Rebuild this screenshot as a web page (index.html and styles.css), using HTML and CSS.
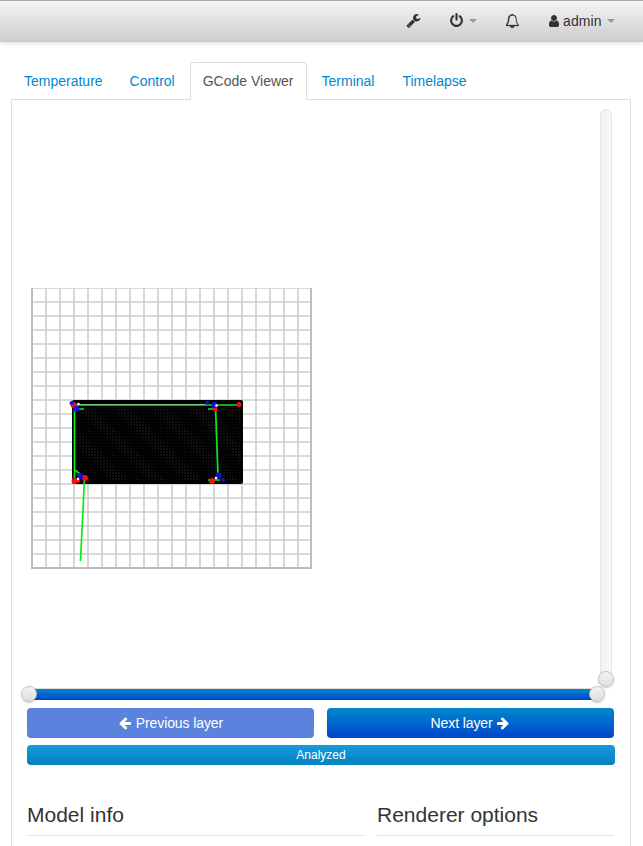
FILE: index.html
```html
<!DOCTYPE html>
<html lang="en">
  <head>
    <meta charset="UTF-8">
    <title>OctoPrint</title>
    <link rel="stylesheet" href="styles.css">
  </head>
  <body>
    <div class="navbar">
      <div class="nav-item nav-wrench">
        <svg class="icon" viewBox="0 0 1792 1792"><path d="M448 1472q0-26-19-45t-45-19-45 19-19 45 19 45 45 19 45-19 19-45zm644-420l-682 682q-37 37-90 37-52 0-91-37l-106-108q-38-36-38-90 0-53 38-91l681-681q39 98 114.5 173.5t173.5 114.5zm634-435q0 39-23 106-47 134-164.5 217.5t-258.5 83.5q-185 0-316.5-131.5t-131.5-316.5 131.5-316.5 316.5-131.5q58 0 121.5 16.5t107.5 46.5q16 11 16 28t-16 28l-293 169v224l193 107q5-3 79-48.5t135.5-81 70.5-35.5q15 0 23.5 10t8.5 25z"/></svg>
      </div>
      <div class="nav-item nav-power">
        <svg class="icon" viewBox="0 0 1792 1792"><path d="M1664 896q0 156-61 298t-164 245-245 164-298 61-298-61-245-164-164-245-61-298q0-182 80.5-343t226.5-270q43-32 95.5-25t83.5 50q32 42 24.5 94.5t-49.5 84.5q-98 74-151.5 181t-53.5 228q0 104 40.5 198.5t109.5 163.5 163.5 109.5 198.5 40.5 198.5-40.5 163.5-109.5 109.5-163.5 40.5-198.5q0-121-53.5-228t-151.5-181q-42-32-49.5-84.5t24.5-94.5q31-43 84-50t95 25q146 109 226.5 270t80.5 343zm-640-768v640q0 52-38 90t-90 38-90-38-38-90v-640q0-52 38-90t90-38 90 38 38 90z"/></svg>
        <span class="caret"></span>
      </div>
      <div class="nav-item nav-bell">
        <svg class="icon icon-bell" viewBox="96 96 1600 1664"><path d="M912 1696q0-16-16-16-59 0-101.5-42.5t-42.5-101.5q0-16-16-16t-16 16q0 73 51.5 124.5t124.5 51.5q16 0 16-16zm-666-288h1300q-266-300-266-832 0-51-24-105t-69-103-121.5-80.5-169.5-31.5-169.5 31.5-121.5 80.5-69 103-24 105q0 532-266 832zm1450 0q0 52-38 90t-90 38h-448q0 106-75 181t-181 75-181-75-75-181h-448q-52 0-90-38t-38-90q50-42 91-88t85-119.5 74.5-158.5 50-206 19.5-260q0-152 117-282.5t307-158.5q-8-19-8-39 0-40 28-68t68-28 68 28 28 68q0 20-8 39 190 28 307 158.5t117 282.5q0 139 19.5 260t50 206 74.5 158.5 85 119.5 91 88z"/></svg>
      </div>
      <div class="nav-item nav-user">
        <svg class="icon icon-user" viewBox="256 128 1280 1536"><path d="M1536 1399q0 109-62.5 187t-150.5 78h-854q-88 0-150.5-78t-62.5-187q0-85 8.5-160.5t31.5-152 58.5-131 94-89 134.5-34.5q131 128 313 128t313-128q76 0 134.5 34.5t94 89 58.5 131 31.5 152 8.5 160.5zm-256-887q0 159-112.5 271.5t-271.5 112.5-271.5-112.5-112.5-271.5 112.5-271.5 271.5-112.5 271.5 112.5 112.5 271.5z"/></svg>
        <span>admin</span>
        <span class="caret"></span>
      </div>
    </div>

    <div class="container">
      <ul class="tabs">
        <li class="tab-first"><a href="#">Temperature</a></li>
        <li><a href="#">Control</a></li>
        <li class="active"><a href="#">GCode Viewer</a></li>
        <li><a href="#">Terminal</a></li>
        <li><a href="#">Timelapse</a></li>
      </ul>

      <div class="tab-pane">
        <div class="viewer">
          <svg class="canvas" viewBox="27 109 568 570" width="568" height="570">
            <defs>
              <pattern id="grid" x="25" y="281" width="14" height="14" patternUnits="userSpaceOnUse">
                <path d="M0 7H14M7 0V14" stroke="#cdcdcd" stroke-width="1.6" fill="none"/>
              </pattern>
              <pattern id="bands" width="26" height="26" patternUnits="userSpaceOnUse" patternTransform="rotate(-45)">
                <rect width="26" height="26" fill="#070707"/>
                <rect width="11" height="26" fill="#111"/>
              </pattern>
              <pattern id="dots" width="3" height="3" patternUnits="userSpaceOnUse">
                <rect width="3" height="1" fill="#000"/>
                <rect y="1" width="1" height="2" fill="#000"/>
              </pattern>
            </defs>
            <rect x="31" y="288" width="280" height="280" fill="url(#grid)"/>
            <path d="M32 288V568H311V288" stroke="#bdbdbd" stroke-width="2" fill="none"/>
            <rect x="72" y="400" width="171" height="84" rx="2" fill="#000"/>
            <rect x="76" y="407" width="164" height="74" fill="url(#bands)"/>
            <rect x="76" y="407" width="164" height="74" fill="url(#dots)"/>
            <g stroke="#0ee818" stroke-width="1.7" fill="none">
              <path d="M75 405H240"/>
              <path d="M74.500 405V478"/>
              <path d="M75 470L85 478"/>
              <path d="M215.500 405L218 477"/>
              <path d="M84.500 478L80.500 561"/>
              <path d="M76 409H84M208 409H213M208 480H220"/>
            </g>
            <path d="M80 404.500H208" stroke="#fff" stroke-width="0.6" opacity="0.7"/>
            <g fill="#f01010">
              <circle cx="73.500" cy="405" r="3"/>
              <circle cx="239" cy="404.500" r="2.500"/>
              <circle cx="215" cy="409" r="2.500"/>
              <circle cx="74.500" cy="481" r="3"/>
              <circle cx="85" cy="478" r="3"/>
              <circle cx="78" cy="481" r="2"/>
              <circle cx="212" cy="481" r="3"/>
            </g>
            <g fill="#1010e0">
              <circle cx="76.500" cy="409" r="3"/>
              <circle cx="71.500" cy="403" r="2"/>
              <circle cx="207" cy="403" r="2"/>
              <circle cx="214.500" cy="405" r="3"/>
              <circle cx="80" cy="476" r="3"/>
              <circle cx="218.500" cy="475.500" r="3"/>
              <circle cx="223" cy="480" r="2"/>
            </g>
            <g fill="#fff">
              <circle cx="78.500" cy="404" r="1.300"/>
              <circle cx="216.500" cy="405.500" r="1.300"/>
              <circle cx="78" cy="479" r="1.300"/>
              <circle cx="216" cy="478" r="1.300"/>
            </g>
          </svg>
          <div class="slider-v">
            <span class="handle handle-v"></span>
          </div>
        </div>

        <div class="slider-h">
          <span class="handle handle-start"></span>
          <span class="handle handle-end"></span>
        </div>

        <div class="layer-buttons">
          <button class="btn btn-disabled" type="button">
            <svg class="icon icon-white" viewBox="0 0 1792 1792"><path d="M1664 896v128q0 53-32.500 90.500t-84.500 37.500h-704l293 294q38 36 38 90t-38 90l-75 76q-37 37-90 37-52 0-91-37l-651-652q-37-37-37-90 0-52 37-91l651-650q38-38 91-38 52 0 90 38l75 74q38 38 38 91t-38 91l-293 293h704q52 0 84.500 37.500t32.500 90.500z"/></svg>
            Previous layer
          </button>
          <button class="btn btn-primary" type="button">
            Next layer
            <svg class="icon icon-white" viewBox="0 0 1792 1792"><path d="M1600 960q0 54-37 91l-651 651q-39 37-91 37-51 0-90-37l-75-75q-38-38-38-91t38-91l293-293h-704q-52 0-84.500-37.500t-32.500-90.500v-128q0-53 32.500-90.500t84.500-37.500h704l-293-294q-38-36-38-90t38-90l75-75q38-38 90-38 53 0 91 38l651 651q37 35 37 90z"/></svg>
          </button>
        </div>

        <div class="progress">Analyzed</div>

        <div class="info-row">
          <h3 class="info-left">Model info</h3>
          <h3 class="info-right">Renderer options</h3>
        </div>
      </div>
    </div>
  </body>
</html>
```

FILE: styles.css
```css
html, body {
  height: 846px;
  overflow: hidden;
}

body {
  font-family: "Liberation Sans", Arial, sans-serif;
  font-size: 14px;
  line-height: 20px;
  color: #333;
  margin: 0;
  padding: 0;
  background-color: white;
}

.navbar {
  display: flex;
  align-items: center;
  box-sizing: border-box;
  height: 42px;
  padding: 0 0 2px 406px;
  border-top: 1px solid #aaa;
  background: linear-gradient(to bottom, #f5f5f5, #cccccc);
  box-shadow: 0 1px 5px rgba(0, 0, 0, 0.15);
}

.nav-item {
  display: flex;
  align-items: center;
}

.nav-wrench {
  width: 43px;
}

.nav-power {
  width: 57px;
}

.nav-bell {
  width: 43px;
}

.nav-user {
  gap: 4px;
}

.nav-user span:first-of-type {
  letter-spacing: 0.1px;
}

.nav-power .caret {
  margin-left: 5px;
}

.nav-user .caret {
  margin-left: 1px;
}

.icon {
  display: block;
  width: 15px;
  height: 15px;
  fill: #333;
}

.icon-bell {
  width: 13px;
  height: 14px;
  stroke: #333;
  stroke-width: 30;
}

.icon-user {
  width: 10px;
  height: 12px;
}

.icon-white {
  display: inline-block;
  width: 14px;
  height: 14px;
  fill: white;
  vertical-align: -2px;
}

.caret {
  width: 0;
  height: 0;
  border-top: 4px solid #999;
  border-left: 4px solid transparent;
  border-right: 4px solid transparent;
}

.container {
  width: 620px;
  margin-left: 11px;
}

.tabs {
  display: flex;
  gap: 2px;
  list-style: none;
  margin: 20px 0 -1px 0;
  padding: 0;
  position: relative;
}

.tabs a {
  display: block;
  padding: 8px 12px;
  border: 1px solid transparent;
  border-radius: 4px 4px 0 0;
  color: #0088cc;
  text-decoration: none;
}

.tabs .tab-first {
  margin-right: -1px;
}

.tabs .active a {
  color: #555;
  background-color: white;
  border-color: #ddd #ddd white;
}

.tab-pane {
  box-sizing: border-box;
  height: 800px;
  padding: 9px 15px 0;
  border: 1px solid #ddd;
}

.viewer {
  display: flex;
  gap: 5px;
}

.canvas {
  display: block;
}

.slider-v {
  position: relative;
  box-sizing: border-box;
  width: 12px;
  height: 570px;
  border-radius: 6px;
  border: 1px solid #e6e6e6;
  background: linear-gradient(to right, #f0f0f0, #f9f9f9);
}

.slider-h {
  position: relative;
  box-sizing: border-box;
  width: 568px;
  height: 12px;
  margin: 9px 0 0 2px;
  border-top: 1px solid #ddd;
  background: linear-gradient(to bottom, #0088cc, #0044cc);
}

.handle {
  position: absolute;
  box-sizing: border-box;
  width: 16px;
  height: 16px;
  border: 1px solid #c4c4c4;
  border-radius: 50%;
  background: linear-gradient(to bottom, #f4f4f4, #dfdfdf);
  box-shadow: 0 1px 2px rgba(0, 0, 0, 0.2);
}

.handle-v {
  left: -3px;
  bottom: -9px;
}

.handle-start {
  left: -8px;
  top: -3px;
}

.handle-end {
  right: -8px;
  top: -3px;
}

.layer-buttons {
  display: flex;
  gap: 13px;
  width: 587px;
  margin-top: 8px;
}

.btn {
  flex: 1;
  height: 30px;
  padding: 0;
  border: none;
  border-radius: 4px;
  color: white;
  font-family: inherit;
  font-size: 14px;
  letter-spacing: -0.1px;
}

.btn-disabled {
  background-color: #5b82dc;
}

.btn-primary {
  background: linear-gradient(to bottom, #0088cc, #0044cc);
}

.progress {
  width: 588px;
  height: 20px;
  margin-top: 7px;
  border-radius: 4px;
  background: linear-gradient(to bottom, #149bdf, #0480be);
  color: white;
  font-size: 12px;
  line-height: 20px;
  text-align: center;
}

.info-row {
  display: flex;
  gap: 13px;
  width: 587px;
  margin-top: 35px;
}

.info-row h3 {
  margin: 0;
  padding-bottom: 5px;
  border-bottom: 1px solid #e5e5e5;
  font-size: 21px;
  font-weight: normal;
  line-height: 30px;
}

.info-left {
  width: 337px;
}

.info-right {
  width: 237px;
}
```
